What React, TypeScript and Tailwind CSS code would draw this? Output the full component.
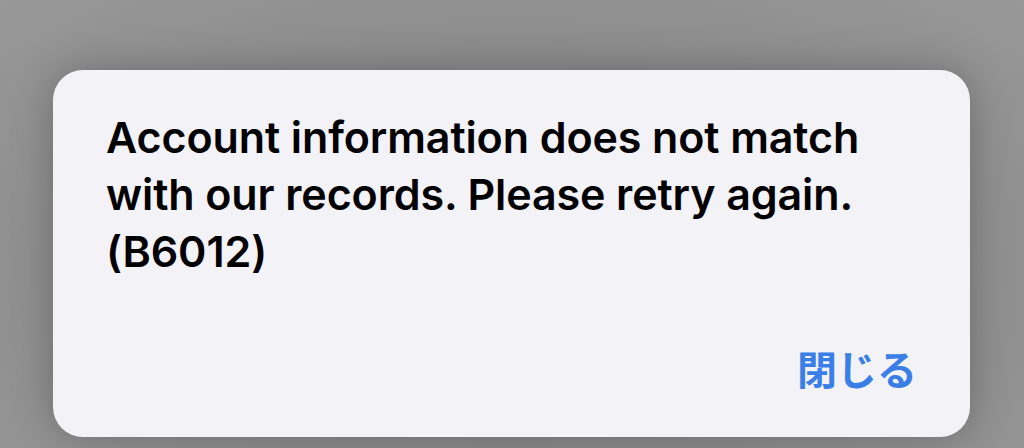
export default function App() {
  return (
    <div
      className="w-[1024px] h-[448px] overflow-hidden bg-[radial-gradient(ellipse_at_50%_60%,#7d7d7d_0%,#8a8a8a_45%,#989898_100%)] flex flex-col pl-[53px] pr-[54px] pt-[70px]"
      style={{ fontFamily: 'Inter, "Noto Sans CJK JP", sans-serif' }}
    >
      <div className="h-[367px] rounded-[30px] bg-[#f2f2f7] shadow-[0_0_40px_rgba(0,0,0,0.25)] flex flex-col pl-[53px] pr-[53px] pt-[39px] pb-[44px]">
        <p className="text-[43px] leading-[57px] font-semibold text-black tracking-[-0.1px]">
          Account information does not match
          <br />
          with our records. Please retry again.
          <br />
          (B6012)
        </p>
        <div className="flex-1" />
        <div className="flex justify-end">
          <span className="text-[40px] leading-[44px] font-semibold text-[#3a7ee8]">閉じる</span>
        </div>
      </div>
    </div>
  );
}
